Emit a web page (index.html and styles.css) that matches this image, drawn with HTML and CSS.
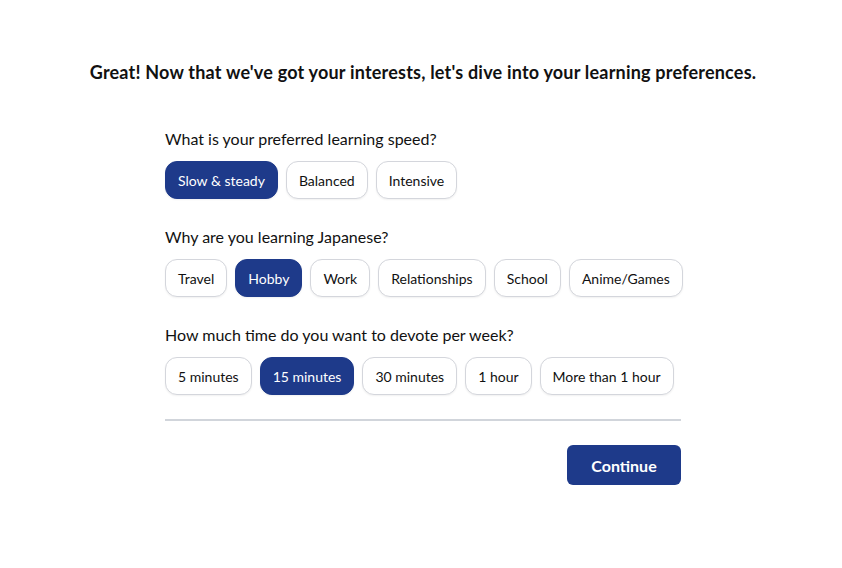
FILE: index.html
```html
<!DOCTYPE html>
<html lang="en">
<head>
<meta charset="utf-8">
<title>Learning preferences</title>
<link rel="stylesheet" href="styles.css">
</head>
<body>
<main class="page">
  <h1 class="title">Great! Now that we've got your interests, let's dive into your learning preferences.</h1>
  <div class="form">
    <section class="question">
      <p class="label">What is your preferred learning speed?</p>
      <div class="options">
        <button class="opt selected">Slow &amp; steady</button>
        <button class="opt">Balanced</button>
        <button class="opt">Intensive</button>
      </div>
    </section>
    <section class="question">
      <p class="label">Why are you learning Japanese?</p>
      <div class="options">
        <button class="opt">Travel</button>
        <button class="opt selected">Hobby</button>
        <button class="opt">Work</button>
        <button class="opt">Relationships</button>
        <button class="opt">School</button>
        <button class="opt">Anime/Games</button>
      </div>
    </section>
    <section class="question">
      <p class="label">How much time do you want to devote per week?</p>
      <div class="options">
        <button class="opt">5 minutes</button>
        <button class="opt selected">15 minutes</button>
        <button class="opt">30 minutes</button>
        <button class="opt">1 hour</button>
        <button class="opt">More than 1 hour</button>
      </div>
    </section>
    <hr class="divider">
    <div class="actions">
      <button class="continue">Continue</button>
    </div>
  </div>
</main>
</body>
</html>
```
FILE: styles.css
```css
* { box-sizing: border-box; }
html, body { margin: 0; padding: 0; background: #fff; }
body {
  font-family: "Segoe UI", Lato, "Noto Sans", sans-serif;
  color: #111;
}
.page {
  padding-top: 61px;
  padding-left: 4px;
  display: flex;
  flex-direction: column;
  align-items: center;
}
.title {
  margin: 0;
  font-size: 18px;
  line-height: 22px;
  letter-spacing: 0.2px;
  font-weight: 700;
  color: #111;
  text-align: center;
  white-space: nowrap;
}
.form {
  width: 516px;
  margin-top: 46px;
  display: flex;
  flex-direction: column;
  gap: 28px;
}
.question { display: flex; flex-direction: column; gap: 12px; }
.label {
  margin: 0;
  font-size: 16px;
  line-height: 20px;
  color: #111;
}
.options { display: flex; gap: 8px; flex-wrap: nowrap; }
.opt {
  font-family: inherit;
  font-size: 14px;
  height: 38px;
  padding: 0 12px;
  border: 1px solid #d4d6dc;
  border-radius: 12px;
  background: #fff;
  color: #111;
  box-shadow: 0 1px 2px rgba(0,0,0,0.06);
  white-space: nowrap;
  flex: 0 0 auto;
  cursor: pointer;
}
.opt.selected {
  background: #1e3a8a;
  border-color: #1e3a8a;
  color: #fff;
}
.divider {
  margin: -4px 0 0 0;
  border: 0;
  height: 2px;
  background: #d1d5db;
}
.actions { display: flex; justify-content: flex-end; margin-top: -4px; }
.continue {
  font-family: inherit;
  font-size: 16px;
  font-weight: 700;
  width: 114px;
  height: 40px;
  border: 0;
  border-radius: 6px;
  background: #1e3a8a;
  color: #fff;
  cursor: pointer;
}
```
